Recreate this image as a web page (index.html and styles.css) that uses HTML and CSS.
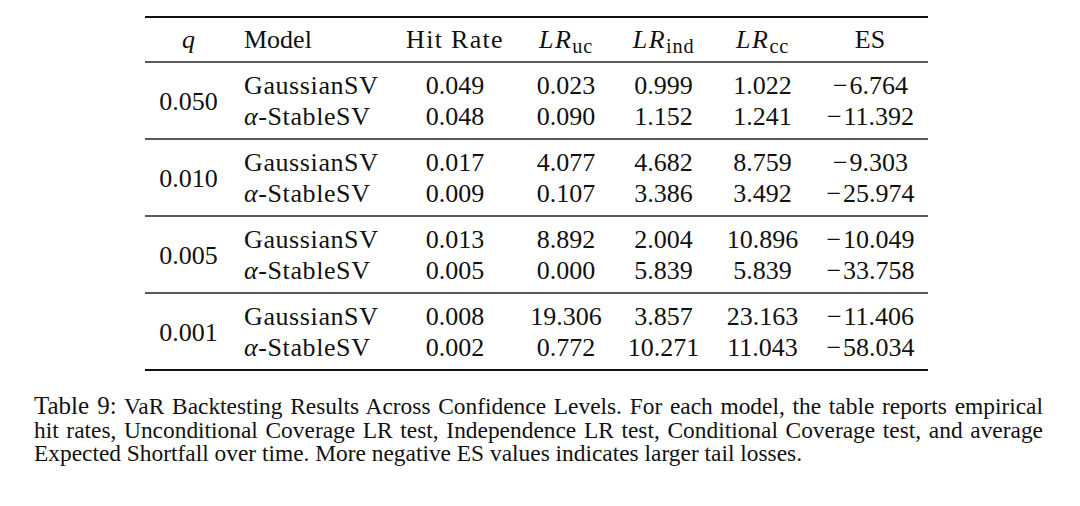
FILE: index.html
```html
<!DOCTYPE html>
<html lang="en">
<head>
<meta charset="utf-8">
<title>Table 9</title>
<link rel="stylesheet" href="styles.css">
</head>
<body>
<figure class="fig">
  <table class="res">
    <colgroup>
      <col class="c-q"><col class="c-model"><col class="c-hit"><col class="c-uc"><col class="c-ind"><col class="c-cc"><col class="c-es">
    </colgroup>
    <thead>
      <tr>
        <th class="ctr"><i>q</i></th>
        <th class="lft">Model</th>
        <th class="ctr wide">Hit Rate</th>
        <th class="ctr"><i class="lr">LR</i><span class="sb">uc</span></th>
        <th class="ctr"><i class="lr">LR</i><span class="sb">ind</span></th>
        <th class="ctr"><i class="lr">LR</i><span class="sb">cc</span></th>
        <th class="ctr">ES</th>
      </tr>
    </thead>
    <tbody>
      <tr class="first"><td class="ctr q" rowspan="2">0.050</td><td class="lft nm">GaussianSV</td><td>0.049</td><td>0.023</td><td>0.999</td><td>1.022</td><td><span class="m">−</span>6.764</td></tr>
      <tr class="last"><td class="lft nm"><i>α</i>-StableSV</td><td>0.048</td><td>0.090</td><td>1.152</td><td>1.241</td><td><span class="m">−</span>11.392</td></tr>
    </tbody>
    <tbody>
      <tr class="first"><td class="ctr q" rowspan="2">0.010</td><td class="lft nm">GaussianSV</td><td>0.017</td><td>4.077</td><td>4.682</td><td>8.759</td><td><span class="m">−</span>9.303</td></tr>
      <tr class="last"><td class="lft nm"><i>α</i>-StableSV</td><td>0.009</td><td>0.107</td><td>3.386</td><td>3.492</td><td><span class="m">−</span>25.974</td></tr>
    </tbody>
    <tbody>
      <tr class="first"><td class="ctr q" rowspan="2">0.005</td><td class="lft nm">GaussianSV</td><td>0.013</td><td>8.892</td><td>2.004</td><td>10.896</td><td><span class="m">−</span>10.049</td></tr>
      <tr class="last"><td class="lft nm"><i>α</i>-StableSV</td><td>0.005</td><td>0.000</td><td>5.839</td><td>5.839</td><td><span class="m">−</span>33.758</td></tr>
    </tbody>
    <tbody class="final">
      <tr class="first"><td class="ctr q" rowspan="2">0.001</td><td class="lft nm">GaussianSV</td><td>0.008</td><td>19.306</td><td>3.857</td><td>23.163</td><td><span class="m">−</span>11.406</td></tr>
      <tr class="last"><td class="lft nm"><i>α</i>-StableSV</td><td>0.002</td><td>0.772</td><td>10.271</td><td>11.043</td><td><span class="m">−</span>58.034</td></tr>
    </tbody>
  </table>
  <figcaption class="cap">
    <span class="line just"><span class="lbl">Table 9:</span> VaR Backtesting Results Across Confidence Levels. For each model, the table reports empirical</span>
    <span class="line just">hit rates, Unconditional Coverage LR test, Independence LR test, Conditional Coverage test, and average</span>
    <span class="line">Expected Shortfall over time. More negative ES values indicates larger tail losses.</span>
  </figcaption>
</figure>
</body>
</html>
```

FILE: styles.css
```css
html, body {
  margin: 0;
  padding: 0;
  background: #ffffff;
}

body {
  color: #111111;
  font-family: "Liberation Serif", "Times New Roman", serif;
}

.fig {
  margin: 0;
  padding: 16px 0 0 0;
}

.res {
  margin-left: 145px;
  width: 783px;
  table-layout: fixed;
  border-collapse: separate;
  border-spacing: 0;
  font-size: 26px;
  line-height: 31px;
}

.c-q { width: 87px; }
.c-model { width: 160px; }
.c-hit { width: 126px; }
.c-uc { width: 96px; }
.c-ind { width: 99px; }
.c-cc { width: 99px; }
.c-es { width: 116px; }

.res th,
.res td {
  padding: 0;
  text-align: center;
  font-weight: normal;
  white-space: nowrap;
}

.res th {
  border-top: 2px solid #111111;
  border-bottom: 2px solid #5a5a5a;
  padding-top: 6px;
  padding-bottom: 6px;
}

.res .lft {
  text-align: left;
  padding-left: 12px;
}

.res .nm {
  letter-spacing: 0.6px;
}

.res .wide {
  letter-spacing: 1.3px;
}

.res .q {
  vertical-align: middle;
}

.res tr.first td {
  padding-top: 7px;
}

.res tr.last td {
  padding-bottom: 6px;
}

.res tr.first td.q {
  padding-bottom: 6px;
}

.res tbody + tbody tr.first td {
  border-top: 2px solid #5a5a5a;
}

.res tbody.final tr.last td,
.res tbody.final td.q {
  border-bottom: 2px solid #111111;
}

.lr {
  letter-spacing: 1.5px;
}

.sb {
  font-size: 0.78em;
  letter-spacing: 0.8px;
  line-height: 0;
  position: relative;
  top: 0.25em;
}

.m {
  padding: 0 2px 0 1px;
}

.cap {
  margin: 22px 0 0 34px;
  width: 1009px;
  font-size: 23.4px;
  line-height: 23.5px;
}

.line {
  display: block;
  white-space: nowrap;
}

.just {
  text-align: justify;
  text-align-last: justify;
}

.lbl {
  font-size: 25px;
  line-height: 1;
}
```
